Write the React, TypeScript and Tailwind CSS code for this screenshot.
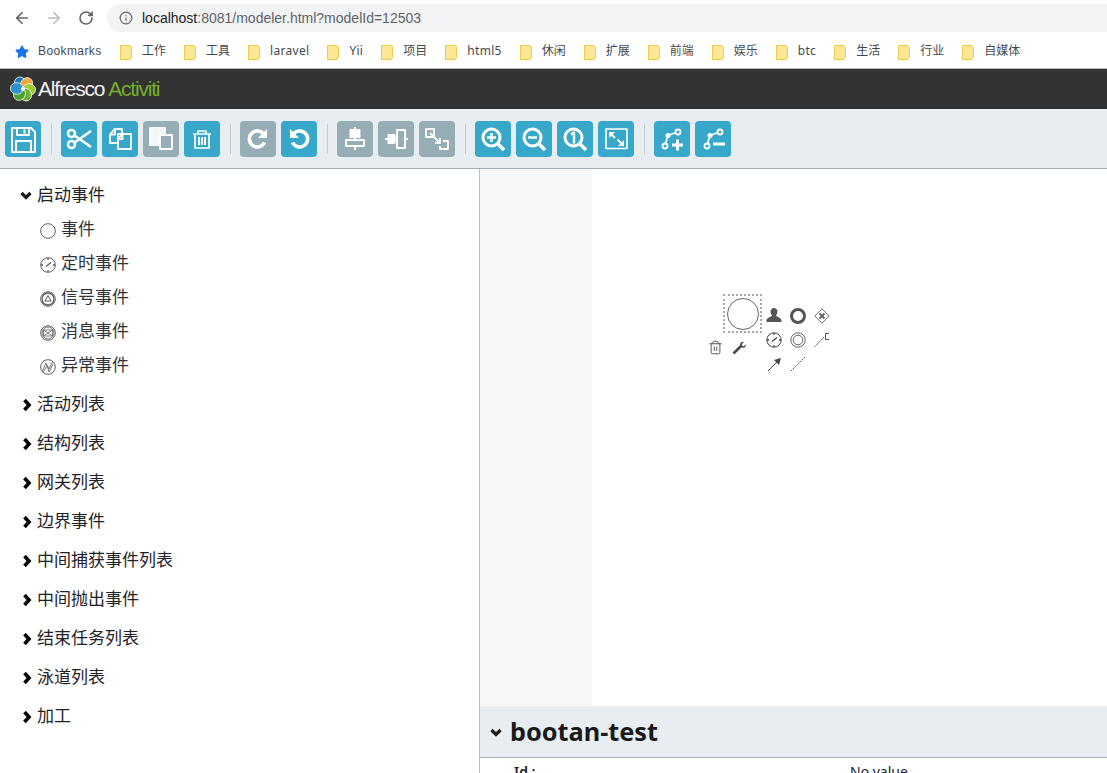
import React from 'react';
import { ArrowLeft, ArrowRight, RotateCw, Info, Star, Trash2 } from 'lucide-react';

const bookmarks = ['工作', '工具', 'laravel', 'Yii', '项目', 'html5', '休闲', '扩展', '前端', '娱乐', 'btc', '生活', '行业', '自媒体'];

const groups = ['活动列表', '结构列表', '网关列表', '边界事件', '中间捕获事件列表', '中间抛出事件', '结束任务列表', '泳道列表', '加工'];

const Folder = () => (
  <svg width="12" height="15" viewBox="0 0 12 15" className="shrink-0">
    <path d="M.5.5h9.500l1.500 1.500v10.500l-1.500 2h-9.500z" fill="#ffe794" stroke="#eec94b" />
  </svg>
);

const Down = ({ size = 12 }: { size?: number }) => (
  <svg width={size} height={size} viewBox="0 0 12 12" className="shrink-0">
    <path d="M1.500 4 6 8.500 10.500 4" fill="none" stroke="#1c1c1c" strokeWidth="3.200" />
  </svg>
);

const Right = () => (
  <svg width="11" height="12" viewBox="0 0 11 12" className="shrink-0">
    <path d="M3.500 1 8 6l-4.500 5" fill="none" stroke="#000000" strokeWidth="3.600" />
  </svg>
);

const ToolButton = ({ children, off }: { children: React.ReactNode; off?: boolean }) => (
  <button className={`w-9 h-9 rounded-[4px] ${off ? 'bg-[#97adb5]' : 'bg-[#37a8c9]'}`}>
    <svg width="36" height="36" viewBox="0 0 36 36" fill="none" stroke="white" strokeWidth="2" strokeLinejoin="round">
      {children}
    </svg>
  </button>
);

const Sep = () => <div className="w-px h-[30px] bg-[#c4c9cd] ml-[10px] mr-[9px]" />;

const EventIcon = ({ children }: { children?: React.ReactNode }) => (
  <svg width="16" height="16" viewBox="0 0 16 16" fill="none" stroke="#5c5c5c" strokeWidth="1" className="shrink-0">
    <circle cx="8" cy="8" r="7.300" />
    {children}
  </svg>
);

const subItems: { label: string; icon: React.ReactNode }[] = [
  { label: '事件', icon: null },
  { label: '定时事件', icon: <path d="M8 1v2M8 13v2M1 8h2M13 8h2M6 9.500l5-4" strokeWidth="1.300" /> },
  { label: '信号事件', icon: <><circle cx="8" cy="8" r="6" strokeWidth="1.300" /><path d="M8 4.500l3 5.500H5z" /></> },
  { label: '消息事件', icon: <><circle cx="8" cy="8" r="6" strokeWidth="1" stroke="#777777" /><path d="M3.500 5h9v6h-9zM3.500 5l9 6M12.500 5l-9 6" stroke="#777777" /></> },
  { label: '异常事件', icon: <path d="M2.500 12 6 4l3 6 3.500-7M3.500 13 7 6.500l2 6.500 4-8" stroke="#777777" /> },
];

const petals = [
  { rotate: -25, color: '#1b78b8' },
  { rotate: 35, color: '#f4a93c' },
  { rotate: 95, color: '#9ccc3c' },
  { rotate: 155, color: '#6fb52c' },
  { rotate: 215, color: '#4ea32c' },
  { rotate: 275, color: '#2f93cc' },
];

const App = () => {
  return (
    <div className="w-[1107px] h-[773px] overflow-hidden bg-white flex flex-col font-['Noto_Sans','Noto_Sans_CJK_SC',sans-serif]">
      {/* Browser chrome */}
      <div className="h-9 flex items-center shrink-0">
        <ArrowLeft className="w-[18px] h-[18px] ml-[13px] text-[#5f6368]" strokeWidth={2.2} />
        <ArrowRight className="w-[18px] h-[18px] ml-[14px] text-[#b8bbbf]" strokeWidth={2.2} />
        <RotateCw className="w-4 h-4 ml-[15px] text-[#5f6368]" strokeWidth={2.4} />
        <div className="ml-[13px] flex-1 h-7 rounded-l-[14px] bg-[#f1f3f4] flex items-center pl-[12px]">
          <Info className="w-[14px] h-[14px] text-[#5f6368]" strokeWidth={2} />
          <span className="ml-[9px] text-[14px] text-[#5f6368] font-['Liberation_Sans',sans-serif]">
            <span className="text-[#202124]">localhost</span>:8081/modeler.html?modelId=12503
          </span>
        </div>
      </div>
      <div className="h-8 flex items-center pl-[15px] shrink-0 text-[12px] text-[#45494e] border-b border-[#b9b9b9] box-content">
        <Star className="w-[14px] h-[14px] text-[#1a73e8] fill-[#1a73e8]" />
        <span className="ml-[9px] w-[64px] whitespace-nowrap -translate-y-px font-['Liberation_Sans',sans-serif] tracking-[0.4px]">Bookmarks</span>
        <div className="ml-[18px] flex items-center gap-[18px]">
          {bookmarks.map(name => (
            <div key={name} className="flex items-center gap-[10px]">
              <Folder />
              <span className={/^[a-zA-Z]/.test(name) ? '-translate-y-px tracking-[0.3px]' : '-translate-y-px'}>{name}</span>
            </div>
          ))}
        </div>
      </div>

      {/* Header */}
      <div className="h-10 bg-[#333333] flex items-center pl-[10px] shrink-0">
        <svg width="26" height="26" viewBox="0 0 26 26">
          {petals.map(p => (
            <ellipse key={p.rotate} cx="13" cy="6.800" rx="5.800" ry="6.500" fill={p.color} stroke="white" strokeWidth="0.700" transform={`rotate(${p.rotate} 13 13)`} />
          ))}
          <circle cx="13" cy="13" r="2" fill="white" />
        </svg>
        <span className="text-[21px] tracking-[-1.200px] font-light text-[#f2f2f2] ml-[2px] font-['Liberation_Sans',sans-serif]">Alfresco</span>
        <span className="text-[21px] tracking-[-1.200px] font-light text-[#74ae26] ml-[4px] font-['Liberation_Sans',sans-serif]">Activiti</span>
      </div>

      {/* Toolbar */}
      <div className="h-[60px] bg-[#e8edf1] border-b border-[#a4acb8] flex items-center pl-[5px] shrink-0">
        <ToolButton>
          <path d="M7 7h19l4 4v20H7z" />
          <path d="M12 7v7h12V7M19.500 8.500v4M11 31V20h15v11" />
        </ToolButton>
        <Sep />
        <div className="flex gap-[5px]">
          <ToolButton>
            <g strokeWidth="2.600">
              <circle cx="10.500" cy="12.500" r="3.500" />
              <circle cx="10.500" cy="23.500" r="3.500" />
              <path d="M13.500 14.500 30 26M13.500 21.500 30 10" />
            </g>
          </ToolButton>
          <ToolButton>
            <g strokeWidth="1.800">
              <path d="M8 13.500 12.500 8H20v5M8 13.500V22h7M8 13.500h5V8" />
              <path d="M16 13h13v15H16zM16 18l4.500-5v5z" />
            </g>
          </ToolButton>
          <ToolButton off>
            <path d="M7 7h15v17H7z" fill="#f4f6f7" stroke="#f4f6f7" />
            <path d="M17 14h12v14H17z" fill="#97adb5" strokeWidth="1.800" />
          </ToolButton>
          <ToolButton>
            <g strokeWidth="1.700">
              <path d="M9 13h18M14 13v-3h8v3M11 13v14h14V13" />
              <path d="M15 16v8M18 16v8M21 16v8" strokeWidth="2" />
            </g>
          </ToolButton>
        </div>
        <Sep />
        <div className="flex gap-[5px]">
          <ToolButton off>
            <path d="M24.500 21.500a8 8 0 1 1-.5-8" strokeWidth="3.600" />
            <path d="M27 8v9h-9z" fill="white" stroke="none" />
          </ToolButton>
          <ToolButton>
            <path d="M11.500 21.500a8 8 0 1 0 .5-8" strokeWidth="3.600" />
            <path d="M9 8v9h9z" fill="white" stroke="none" />
          </ToolButton>
        </div>
        <Sep />
        <div className="flex gap-[5px]">
          <ToolButton off>
            <path d="M18 6v3M13.500 9h9v7h-9zM18 16v3M9 19h18v6H9zM18 25v4" />
            <path d="M14 10h8v6h-8z" fill="white" stroke="none" />
          </ToolButton>
          <ToolButton off>
            <path d="M7 18h3M10.500 14h6v8h-6zM16.500 18h2M19 9h8v18h-8zM27 18h3" />
            <path d="M11 14h6v8h-6z" fill="white" stroke="none" />
          </ToolButton>
          <ToolButton off>
            <path d="M15 15V8H7v8h8M11 12l10 10M21 17v5h-5" strokeWidth="1.800" />
            <path d="M24 20h5v8h-8v-3" strokeWidth="1.800" />
          </ToolButton>
        </div>
        <Sep />
        <div className="flex gap-[5px]">
          <ToolButton>
            <circle cx="16.500" cy="16.500" r="8.500" strokeWidth="3" />
            <path d="M23 23l6 6" strokeWidth="3.600" />
            <path d="M12 16.500h9M16.500 12v9" strokeWidth="2.400" />
          </ToolButton>
          <ToolButton>
            <circle cx="16.500" cy="16.500" r="8.500" strokeWidth="3" />
            <path d="M23 23l6 6" strokeWidth="3.600" />
            <path d="M12 16.500h9" strokeWidth="2.400" />
          </ToolButton>
          <ToolButton>
            <circle cx="16.500" cy="16.500" r="8.500" strokeWidth="3" />
            <path d="M23 23l6 6" strokeWidth="3.600" />
            <path d="M14 13.500l3-2v11" strokeWidth="2.400" />
          </ToolButton>
          <ToolButton>
            <path d="M8 8h21v19.500H8z" strokeWidth="1.600" />
            <path d="M13 13l4 4M23 22l-3.500-3.500" strokeWidth="2" />
            <path d="M11 11h6l-6 6zM26 25h-6l6-6z" fill="white" stroke="none" />
          </ToolButton>
        </div>
        <Sep />
        <div className="flex gap-[5px]">
          <ToolButton>
            <g strokeWidth="1.800">
              <circle cx="11" cy="25" r="2.500" />
              <circle cx="24" cy="11" r="2.500" />
              <path d="M11.500 22.500 14 14.500l8-3" />
            </g>
            <circle cx="14" cy="14.500" r="2.500" fill="white" stroke="none" />
            <path d="M18 24h11M23.500 18.500v11" strokeWidth="3" />
          </ToolButton>
          <ToolButton>
            <g strokeWidth="1.800">
              <circle cx="12" cy="25" r="2.500" />
              <circle cx="25" cy="11" r="2.500" />
              <path d="M12.500 22.500 15 14.500l8-3" />
            </g>
            <circle cx="15" cy="14.500" r="2.500" fill="white" stroke="none" />
            <path d="M18 23h12" strokeWidth="3" />
          </ToolButton>
        </div>
      </div>

      <div className="flex-1 flex min-h-0">
        {/* Palette */}
        <div className="w-[480px] shrink-0 border-r border-[#b9bfc8] pt-[8px] text-[17px] leading-[24px] text-[#1f2328]">
          <div className="h-[36px] flex items-center pl-[20px]">
            <Down />
            <span className="ml-[5px]">启动事件</span>
          </div>
          {subItems.map(item => (
            <div key={item.label} className="h-[34px] flex items-center pl-[40px] gap-[5px] text-[#30343a]">
              <span className="pt-[2px]"><EventIcon>{item.icon}</EventIcon></span>
              <span className="-translate-y-px">{item.label}</span>
            </div>
          ))}
          <div className="mt-[2px]">
            {groups.map(name => (
              <div key={name} className="h-[39px] flex items-center pl-[21px] gap-[5px]">
                <Right />
                <span className="-translate-y-px">{name}</span>
              </div>
            ))}
          </div>
        </div>

        {/* Canvas and properties */}
        <div className="flex-1 flex flex-col min-w-0">
          <div className="h-[537px] flex shrink-0">
            <div className="w-[112px] bg-[#f7f7f7]" />
            <div className="flex-1 relative">
              <div className="absolute left-[131px] top-[125px] w-[39px] h-[39px] border-2 border-dotted border-[#a8a8a8] flex items-center justify-center">
                <div className="w-[32px] h-[32px] rounded-full border-[1.500px] border-[#666666]" />
              </div>
              <Trash2 className="absolute left-[116px] top-[171px] w-[15px] h-[15px] text-[#444444]" strokeWidth={1.400} />
              <svg className="absolute left-[140px] top-[171px]" width="15" height="15" viewBox="0 0 15 15" fill="none" stroke="#4a4a4a">
                <path d="M1.500 13.500 9 6" strokeWidth="2.600" />
                <path d="M9 2.500a3 3 0 0 0 0 4.500 3 3 0 0 0 4.500-.5 3 3 0 0 0 .5-2L11.500 6.500l-2-2L12 2a3 3 0 0 0-3 .5z" fill="#4a4a4a" stroke="none" />
              </svg>
              <svg className="absolute left-[174px] top-[138px]" width="16" height="16" viewBox="0 0 16 16" fill="#555555">
                <path d="M8 1a3.500 3.500 0 0 1 3.500 3.800c0 1.700-1 3-1.500 3.700 0 1.200 5 1.500 5.500 5V15H.5v-1.500c.5-3.500 5.500-3.800 5.500-5C5.500 7.800 4.500 6.500 4.500 4.800A3.500 3.500 0 0 1 8 1z" />
              </svg>
              <div className="absolute left-[198px] top-[139px] w-[16px] h-[16px] rounded-full border-[3px] border-[#555555]" />
              <svg className="absolute left-[222px] top-[139px]" width="16" height="16" viewBox="0 0 16 16" fill="none" stroke="#666666">
                <path d="M8 .8 15.200 8 8 15.200.8 8z" />
                <path d="M5.500 5.500l5 5M10.500 5.500l-5 5" strokeWidth="2" />
              </svg>
              <svg className="absolute left-[174px] top-[163px]" width="16" height="16" viewBox="0 0 16 16" fill="none" stroke="#444444">
                <circle cx="8" cy="8" r="7.200" />
                <path d="M8 1v2M8 13v2M1 8h2M13 8h2M6 9.500l5-4" strokeWidth="1.300" />
              </svg>
              <svg className="absolute left-[198px] top-[163px]" width="16" height="16" viewBox="0 0 16 16" fill="none" stroke="#666666">
                <circle cx="8" cy="8" r="7.200" />
                <circle cx="8" cy="8" r="4.800" />
              </svg>
              <svg className="absolute left-[222px] top-[163px]" width="16" height="16" viewBox="0 0 16 16" fill="none" stroke="#555555">
                <path d="M.5 15 10 5" strokeDasharray="2 1" />
                <path d="M15 1.500h-3.500v6H15" />
              </svg>
              <svg className="absolute left-[175px] top-[187px]" width="16" height="16" viewBox="0 0 16 16" fill="none" stroke="#444444">
                <path d="M1 15 11 5" strokeWidth="1" />
                <path d="M14 2l-2 7-5-5z" fill="#444444" stroke="none" />
              </svg>
              <svg className="absolute left-[198px] top-[187px]" width="16" height="16" viewBox="0 0 16 16" fill="none" stroke="#555555">
                <path d="M1 15 15 1" strokeDasharray="2 1" />
              </svg>
            </div>
          </div>
          <div className="h-[52px] bg-[#e8edf1] border-b border-[#a4acb8] flex items-center pl-[10px] shrink-0">
            <Down />
            <span className="ml-[8px] text-[25.300px] pt-[1px] font-bold text-[#1a1a1a]">bootan-test</span>
          </div>
          <div className="flex pl-[34px] text-[14px] text-[#222222] pt-[3px]">
            <span className="w-[336px] font-semibold">Id :</span>
            <span>No value</span>
          </div>
        </div>
      </div>
    </div>
  );
};

export default App;
